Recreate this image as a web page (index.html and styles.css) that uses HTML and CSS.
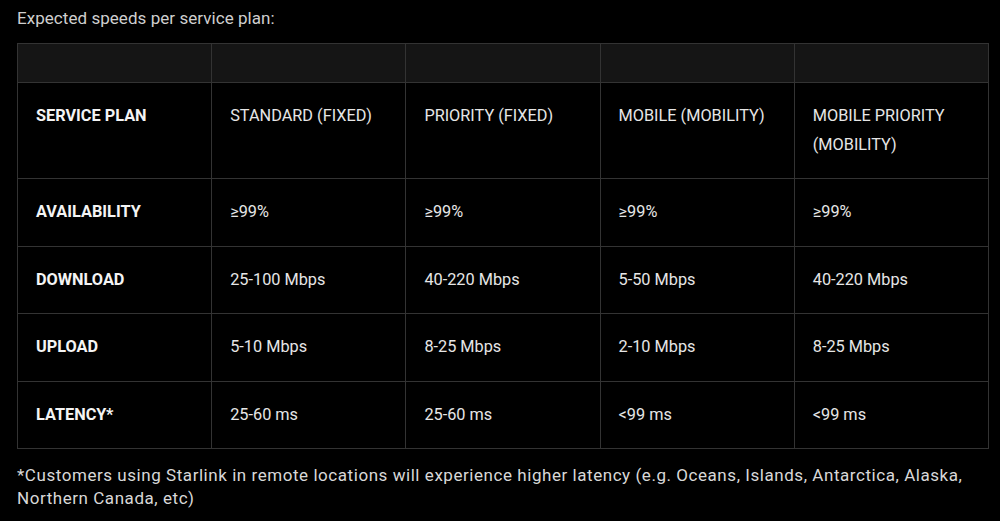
FILE: index.html
```html
<!DOCTYPE html>
<html lang="en">
<head>
<meta charset="utf-8">
<title>Expected speeds</title>
<link rel="stylesheet" href="styles.css">
</head>
<body>
<main class="page">
  <p class="intro">Expected speeds per service plan:</p>
  <table class="plans">
    <thead>
      <tr class="blank"><th></th><th></th><th></th><th></th><th></th></tr>
    </thead>
    <tbody>
      <tr>
        <td class="label">SERVICE PLAN</td>
        <td>STANDARD (FIXED)</td>
        <td>PRIORITY (FIXED)</td>
        <td>MOBILE (MOBILITY)</td>
        <td>MOBILE PRIORITY (MOBILITY)</td>
      </tr>
      <tr>
        <td class="label">AVAILABILITY</td>
        <td>≥99%</td>
        <td>≥99%</td>
        <td>≥99%</td>
        <td>≥99%</td>
      </tr>
      <tr>
        <td class="label">DOWNLOAD</td>
        <td>25-100 Mbps</td>
        <td>40-220 Mbps</td>
        <td>5-50 Mbps</td>
        <td>40-220 Mbps</td>
      </tr>
      <tr>
        <td class="label">UPLOAD</td>
        <td>5-10 Mbps</td>
        <td>8-25 Mbps</td>
        <td>2-10 Mbps</td>
        <td>8-25 Mbps</td>
      </tr>
      <tr>
        <td class="label">LATENCY*</td>
        <td>25-60 ms</td>
        <td>25-60 ms</td>
        <td>&lt;99 ms</td>
        <td>&lt;99 ms</td>
      </tr>
    </tbody>
  </table>
  <p class="note">*Customers using Starlink in remote locations will experience higher latency (e.g. Oceans, Islands, Antarctica, Alaska, Northern Canada, etc)</p>
</main>
</body>
</html>
```

FILE: styles.css
```css
html, body {
  margin: 0;
  padding: 0;
  background: #000;
}

.page {
  padding: 6px 11px 0 17px;
  font-family: Roboto, "Liberation Sans", sans-serif;
  color: #e4e4e4;
}

.intro {
  margin: 0 0 13px;
  font-size: 17px;
  line-height: 24px;
  letter-spacing: 0.05px;
  color: #cfcfcf;
}

.plans {
  width: 972px;
  border-collapse: collapse;
  table-layout: fixed;
  font-size: 16.3px;
  line-height: 29px;
}

.plans th,
.plans td {
  border: 1px solid #333;
  padding: 18px 18px 19px;
  text-align: left;
  vertical-align: top;
}

.plans .blank th {
  background: #151515;
  height: 39px;
  padding: 0;
  box-sizing: border-box;
}

.plans td {
  color: #e6e6e6;
}

.plans tbody tr + tr td {
  padding-bottom: 19.5px;
}

.plans td.label {
  font-weight: 700;
  color: #f4f4f4;
}

.note {
  margin: 15px 0 0;
  font-size: 17px;
  line-height: 23px;
  letter-spacing: 0.55px;
  color: #d8d8d8;
  max-width: 960px;
}
```
